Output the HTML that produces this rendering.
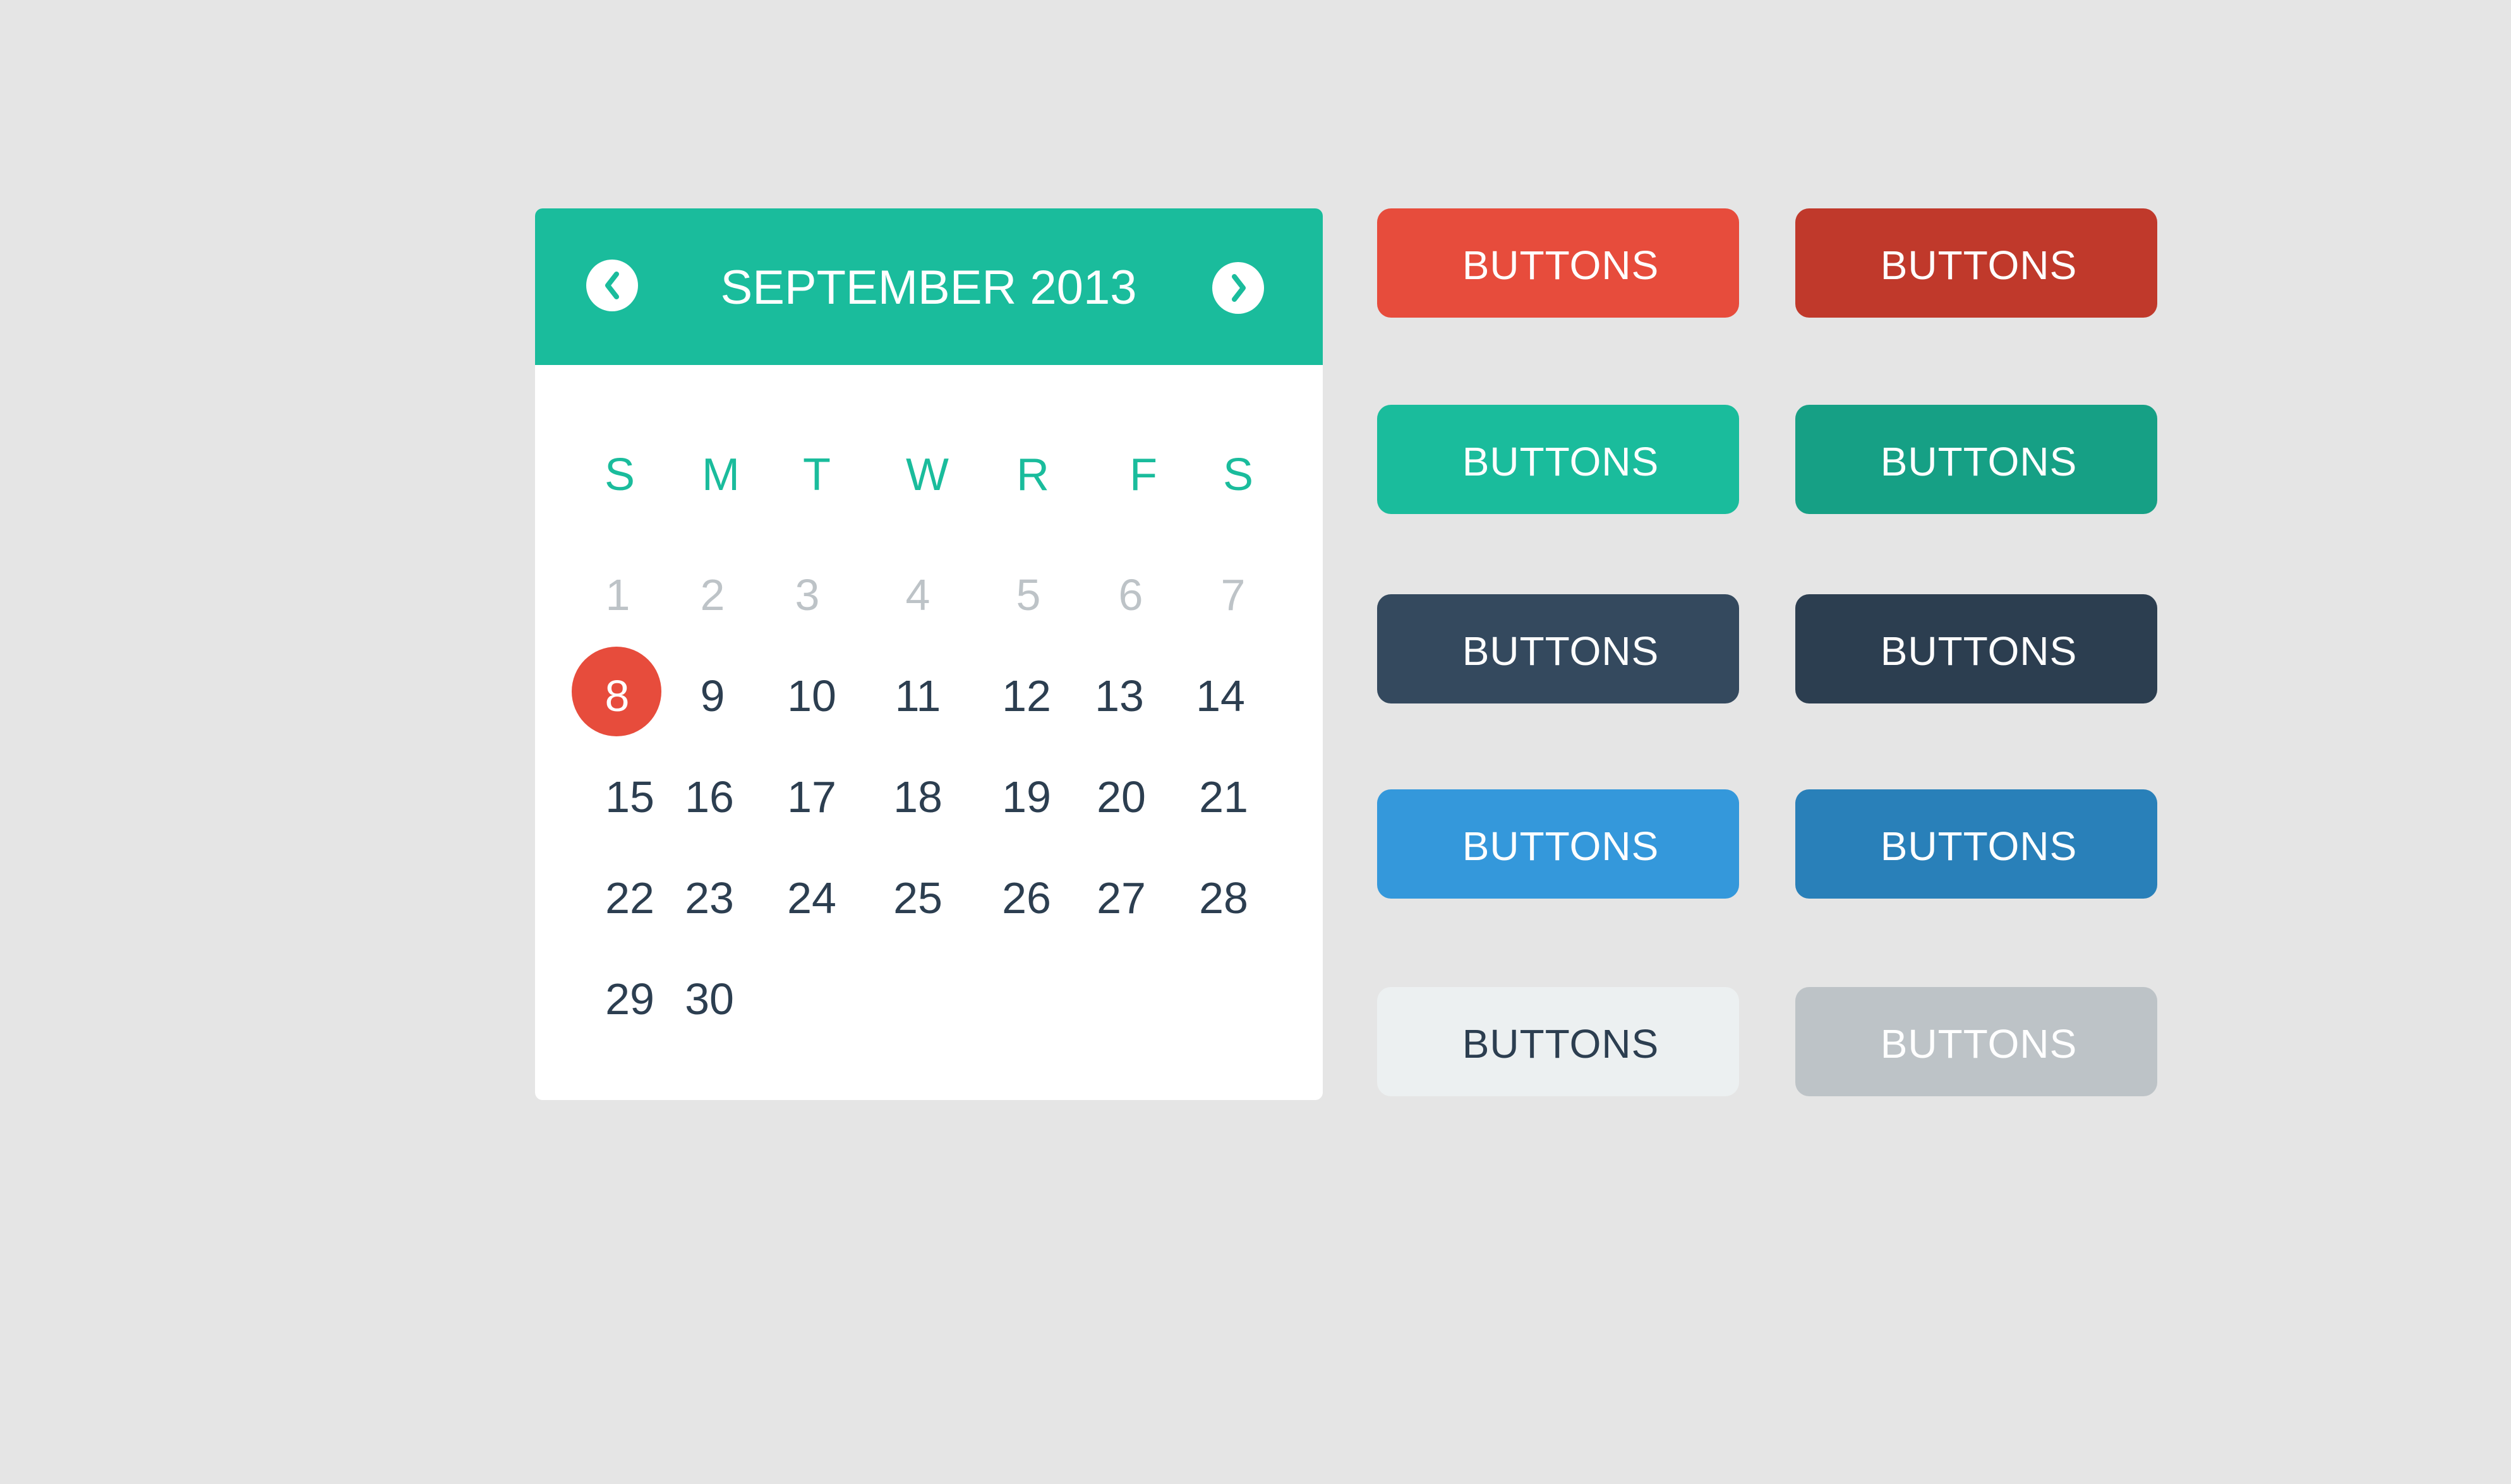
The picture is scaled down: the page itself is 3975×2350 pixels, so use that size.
<!DOCTYPE html>
<html><head><meta charset="utf-8"><style>
html,body{margin:0;padding:0}
body{width:3975px;height:2350px;background:#e5e5e5;position:relative;overflow:hidden;font-family:"Liberation Sans",sans-serif}
.cal{position:absolute;left:847px;top:330px;width:1247px;height:1412px;background:#fff;border-radius:12px;overflow:hidden}
.hdr{position:absolute;left:0;top:0;width:100%;height:248px;background:#1abc9c}
.t{position:absolute;transform:translate(-50%,-50%);white-space:nowrap;line-height:1}
.btn{position:absolute;width:573px;height:173px;border-radius:22px;color:#fff;font-size:64px;display:flex;align-items:center;justify-content:center;letter-spacing:1px;padding-top:6px;box-sizing:border-box;padding-left:8px}
</style></head><body>
<div class="cal">
<div class="hdr"></div>
<div class="t" style="left:623px;top:126px;color:#fff;font-size:76px">SEPTEMBER 2013</div>
<svg style="position:absolute;left:80px;top:80px" width="84" height="84" viewBox="0 0 84 84"><circle cx="42" cy="42" r="41" fill="#fff"/><path d="M49 24 L35 42 L49 60" stroke="#1abc9c" stroke-width="8" fill="none" stroke-linecap="round" stroke-linejoin="round"/></svg>
<svg style="position:absolute;left:1071px;top:84px" width="84" height="84" viewBox="0 0 84 84"><circle cx="42" cy="42" r="41" fill="#fff"/><path d="M36 24 L50 42 L36 60" stroke="#1abc9c" stroke-width="8" fill="none" stroke-linecap="round" stroke-linejoin="round"/></svg>
<div style="position:absolute;left:58px;top:694px;width:142px;height:142px;border-radius:50%;background:#e74c3c"></div>
</div>
<script>
var g=document.querySelector('.cal'),ox=847,oy=330;
function add(x,y,s,c,fs){var d=document.createElement('div');d.className='t';d.style.left=(x-ox)+'px';d.style.top=(y-oy)+'px';d.style.color=c;d.style.fontSize=fs+'px';d.textContent=s;g.appendChild(d);}
var wx=[981,1141,1293,1468,1635,1810,1960],wl=['S','M','T','W','R','F','S'];
wl.forEach(function(l,i){add(wx[i],752,l,'#1abc9c',72);});
var r1=[978,1128,1278,1453,1628,1790,1952];
for(var i=0;i<7;i++)add(r1[i],942,''+(i+1),'#bdc3c7',70);
var r2=[977,1128,1285,1453,1625,1772,1932];
for(var i=0;i<7;i++)add(r2[i],1102,''+(i+8),i==0?'#fff':'#2c3e50',70);
var r3=[997,1123,1285,1453,1625,1775,1937];
for(var i=0;i<7;i++)add(r3[i],1262,''+(i+15),'#2c3e50',70);
for(var i=0;i<7;i++)add(r3[i],1422,''+(i+22),'#2c3e50',70);
add(997,1582,'29','#2c3e50',70);add(1123,1582,'30','#2c3e50',70);
</script>
<div class="btn" style="left:2180px;top:330px;background:#e74c3c">BUTTONS</div>
<div class="btn" style="left:2842px;top:330px;background:#c0392b">BUTTONS</div>
<div class="btn" style="left:2180px;top:641px;background:#1abc9c">BUTTONS</div>
<div class="btn" style="left:2842px;top:641px;background:#16a085">BUTTONS</div>
<div class="btn" style="left:2180px;top:941px;background:#34495e">BUTTONS</div>
<div class="btn" style="left:2842px;top:941px;background:#2c3e50">BUTTONS</div>
<div class="btn" style="left:2180px;top:1250px;background:#3498db">BUTTONS</div>
<div class="btn" style="left:2842px;top:1250px;background:#2980b9">BUTTONS</div>
<div class="btn" style="left:2180px;top:1563px;background:#ecf0f1;color:#2c3e50">BUTTONS</div>
<div class="btn" style="left:2842px;top:1563px;background:#bdc3c7">BUTTONS</div>
</body></html>
